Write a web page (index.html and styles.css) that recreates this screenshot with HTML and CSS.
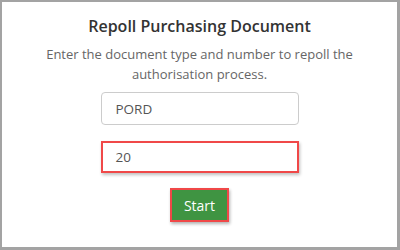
FILE: index.html
```html
<!DOCTYPE html>
<html>
<head>
<meta charset="utf-8">
<link rel="stylesheet" href="styles.css">
</head>
<body>
<div class="frame">
  <h1 class="title">Repoll Purchasing Document</h1>
  <p class="desc">Enter the document type and number to repoll the authorisation process.</p>
  <div class="field"><span>PORD</span></div>
  <div class="field highlight"><span>20</span></div>
  <button class="start">Start</button>
</div>
</body>
</html>
```
FILE: styles.css
```css
html, body {
  margin: 0;
  padding: 0;
  background: #fff;
}
.frame {
  box-sizing: border-box;
  width: 400px;
  height: 250px;
  border-style: solid;
  border-color: #a3a3a3;
  border-width: 2px 3px 3px 2px;
  display: flex;
  flex-direction: column;
  align-items: center;
  font-family: "Open Sans", sans-serif;
  padding-top: 12px;
}
.title {
  margin: 0;
  font-size: 16px;
  font-weight: 600;
  color: #333;
  line-height: 24px;
}
.desc {
  margin: 6px 0 0;
  width: 330px;
  text-align: center;
  font-size: 13px;
  line-height: 20px;
  color: #666;
}
.field {
  box-sizing: border-box;
  width: 198px;
  height: 33px;
  margin-top: 8px;
  border: 1px solid #ccc;
  border-radius: 4px;
  padding-left: 14px;
  display: flex;
  align-items: center;
  font-size: 13.5px;
  color: #555;
}
.field.highlight {
  margin-top: 16px;
  height: 32px;
  border: 2px solid #f04848;
  border-radius: 0;
  padding-left: 13px;
  box-shadow: 1px 2px 3px rgba(0,0,0,0.25);
}
.start {
  margin-top: 15px;
  box-sizing: border-box;
  width: 59px;
  height: 34px;
  background: #3f9442;
  border: 2px solid #f04848;
  color: #fff;
  font-family: "Open Sans", sans-serif;
  font-size: 14px;
  padding: 0;
  box-shadow: 1px 2px 3px rgba(0,0,0,0.3);
}
```
